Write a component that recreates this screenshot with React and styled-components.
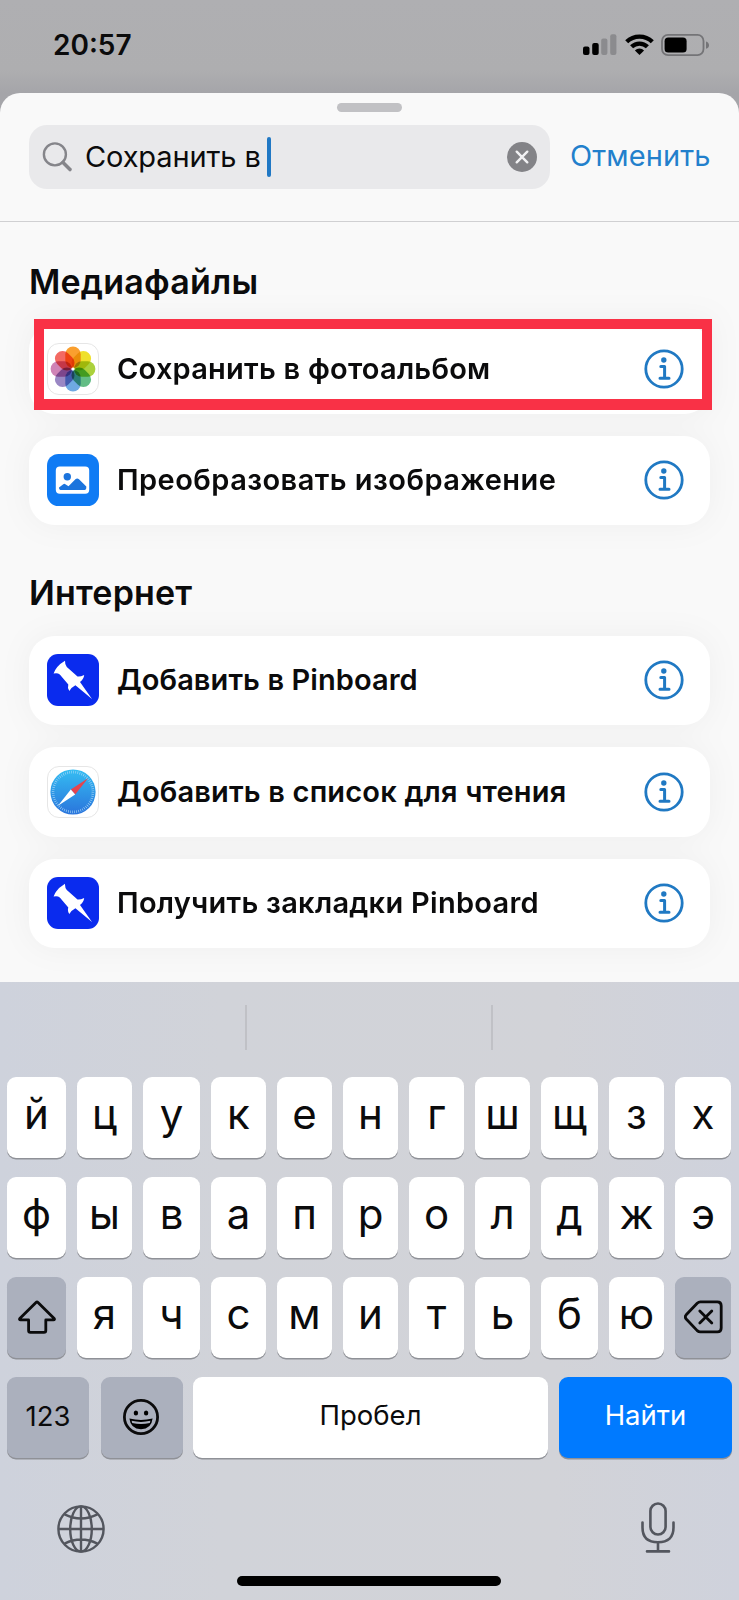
import React, { useState } from 'react'
import styled, { createGlobalStyle } from 'styled-components'

const GlobalStyle = createGlobalStyle`
  * {
    box-sizing: border-box;
  }
  body {
    margin: 0;
    background: #aeaeb1;
    font-family: Inter, Roboto, 'Liberation Sans', sans-serif;
    color: #0b0b0c;
  }
  button {
    border: 0;
    padding: 0;
    margin: 0;
    background: none;
    font: inherit;
    color: inherit;
  }
  svg {
    display: block;
    flex: none;
  }
`

const Phone = styled.div`
  display: flex;
  flex-direction: column;
  width: 739px;
  height: 1600px;
  overflow: hidden;
  background: linear-gradient(#afafb2 0, #aeaeb0 70px, #a5a5a9 93px, #a5a5a9);
`

const StatusBar = styled.div`
  display: flex;
  justify-content: space-between;
  align-items: center;
  flex: none;
  height: 93px;
  padding: 0 29px 4px 53px;
`

const Clock = styled.div`
  font-size: 28px;
  line-height: 34px;
  font-weight: 600;
`

const StatusIcons = styled.div`
  display: flex;
  align-items: center;
  gap: 7px;
`

const Sheet = styled.div`
  display: flex;
  flex-direction: column;
  flex: none;
  height: 889px;
  overflow: hidden;
  border-radius: 20px 20px 0 0;
  background: #f9f9f9;
`

const SheetHeader = styled.div`
  display: flex;
  flex-direction: column;
  align-items: center;
  flex: none;
  height: 129px;
  padding: 10px 29px 0;
  border-bottom: 1px solid #d0d0d2;
`

const Grabber = styled.div`
  width: 65px;
  height: 9px;
  border-radius: 5px;
  background: #c1c1c4;
`

const SearchRow = styled.div`
  display: flex;
  align-items: center;
  width: 100%;
  margin-top: 13px;
`

const SearchField = styled.div`
  display: flex;
  align-items: center;
  flex: none;
  width: 521px;
  height: 64px;
  padding: 0 13px;
  border-radius: 18px;
  background: #e9e9eb;
`

const Query = styled.div`
  margin-left: 12px;
  font-size: 29px;
  line-height: 40px;
  white-space: nowrap;
  letter-spacing: -0.13px;
`

const Caret = styled.div`
  width: 4px;
  height: 40px;
  margin-left: 6px;
  margin-right: auto;
  border-radius: 2px;
  background: #2078c4;
`

const Cancel = styled.button`
  margin-left: 20px;
  font-size: 29px;
  line-height: 40px;
  padding-bottom: 3px;
  color: #2280cc;
  white-space: nowrap;
  letter-spacing: 0.1px;
`

const Section = styled.section`
  flex: none;
  padding: 0 29px;
`

const SectionTitle = styled.h2`
  margin: 0;
  padding-top: ${props => props.$top}px;
  height: ${props => props.$height}px;
  font-size: 34px;
  line-height: 40px;
  font-weight: 600;
  letter-spacing: 0.2px;
`

const CardList = styled.div`
  display: flex;
  flex-direction: column;
  gap: 22px;
  filter: drop-shadow(0 0 15px rgba(0, 0, 0, 0.045));
`

const Card = styled.div`
  position: relative;
  display: flex;
  align-items: center;
  height: 89.4px;
  padding: 0 26px 0 18px;
  border-radius: 26px;
  background: #fff;
`

const CardLabel = styled.div`
  flex: 1;
  margin-left: 18px;
  font-size: 29px;
  line-height: 36px;
  font-weight: 600;
  white-space: nowrap;
  letter-spacing: ${props => props.$tracking}px;
`

/* red marker drawn over the card */
const Highlight = styled.div`
  position: absolute;
  left: 5px;
  top: -5px;
  width: 678px;
  height: 91px;
  border: 10px solid #f93146;
  border-bottom-width: 11px;
`

const Keyboard = styled.div`
  display: flex;
  flex-direction: column;
  flex: 1;
  background: linear-gradient(90deg, #ced2dc 0, #d1d3d9 30%, #d2d3d8 75%, #cfd2dc 100%);
`

const Suggestions = styled.div`
  display: grid;
  grid-template-columns: 247px 246px 1fr;
  flex: none;
  height: 94.5px;
  padding-top: 23px;
`

const Suggestion = styled.div`
  height: 45px;
  border-right: 2px solid #c0c1c6;

  &:last-child {
    border-right: 0;
  }
`

const Keys = styled.div`
  display: flex;
  flex-direction: column;
  gap: 19px;
  padding: 0 7px;
`

const KeyRow = styled.div`
  display: grid;
  column-gap: 11px;
  height: 81px;
  grid-template-columns: 59px 55px 57px 55px 55px 55px 55px 55px 57px 55px 56px;
`

const BottomRow = styled.div`
  display: flex;
  height: 81px;
`

const Key = styled.button`
  display: flex;
  align-items: center;
  justify-content: center;
  height: 81px;
  padding-bottom: 6px;
  border-radius: 9px;
  background: #fff;
  box-shadow: 0 1.5px 0 #8f9197;
  font-size: 42px;
  font-weight: 400;
  line-height: 50px;
`

const FunctionKey = styled(Key)`
  width: ${props => props.$width || 'auto'};
  margin-right: ${props => props.$gap || '0'};
  padding-bottom: ${props => props.$lift || '0'};
  background: ${props => (props.$primary ? '#007aff' : '#abb0bd')};
  color: ${props => (props.$primary ? '#fff' : 'inherit')};
  font-size: 27.5px;
`

const SpaceKey = styled(FunctionKey)`
  background: #fff;
`

const KeyboardFooter = styled.div`
  display: flex;
  justify-content: space-between;
  align-items: flex-end;
  height: 95px;
  padding: 0 64px 0 57px;
`

const HomeIndicator = styled.div`
  width: 264px;
  height: 10px;
  margin: 23.5px 0 0 237px;
  border-radius: 5px;
  background: #000;
`

const SignalIcon = () => (
  <svg width="35" height="22" viewBox="0 0 35 22">
    <rect x="0" y="12.5" width="6.5" height="8.5" rx="2" fill="#000" />
    <rect x="9.2" y="9" width="6.5" height="12" rx="2" fill="#000" />
    <rect x="18.2" y="4.5" width="6.2" height="16.5" rx="2" fill="#8b8b8e" />
    <rect x="27.2" y="0.3" width="6.2" height="20.7" rx="2" fill="#8b8b8e" />
  </svg>
)

const WifiIcon = () => (
  <svg width="29" height="22" viewBox="0 0 29 22">
    <g fill="none" stroke="#000" strokeWidth="4.3">
      <path d="M1.7 7.8A18.2 18.2 0 0 1 27.3 7.8" />
      <path d="M6.6 12.8A11.2 11.2 0 0 1 22.4 12.8" />
    </g>
    <path d="M14.5 21L9.9 16.4A6.6 6.6 0 0 1 19.1 16.4Z" />
  </svg>
)

const BatteryIcon = () => (
  <svg width="49" height="22" viewBox="0 0 49 22">
    <rect x="1" y="0.9" width="41.5" height="20.2" rx="6" fill="none" stroke="#747477" strokeWidth="1.8" />
    <rect x="3.6" y="3.6" width="22" height="15" rx="3.6" />
    <path d="M45 7.6q3 1 3 3.6t-3 3.6z" fill="#747477" />
  </svg>
)

const SearchIcon = () => (
  <svg width="31" height="31" viewBox="0 0 31 31" fill="none" stroke="#85858a">
    <circle cx="12.9" cy="12.4" r="11" strokeWidth="2.4" />
    <path d="M21 20.5L28 27.5" strokeWidth="3.6" strokeLinecap="round" />
  </svg>
)

const ClearIcon = () => (
  <svg width="30" height="30" viewBox="0 0 30 30">
    <circle cx="15" cy="15" r="15" fill="#838387" />
    <path d="M9.7 9.7L20.3 20.3M20.3 9.7L9.7 20.3" stroke="#f1f1f3" strokeWidth="2.4" strokeLinecap="round" />
  </svg>
)

const InfoIcon = () => (
  <svg width="40" height="40" viewBox="0 0 40 40" fill="none" stroke="#2079c3">
    <circle cx="20" cy="20" r="18.2" strokeWidth="2.8" />
    <circle cx="19.8" cy="11" r="2.7" fill="#2079c3" stroke="none" />
    <path d="M16.8 17.6H20.6V28.8M16 29.2H25" strokeWidth="3" strokeLinecap="round" strokeLinejoin="round" />
  </svg>
)

const PETALS = ['#fa9f2e', '#efe02b', '#abd13c', '#63bd85', '#6fa9e2', '#9a87c4', '#cf83b6', '#f36a63']

const Petal = styled.rect`
  mix-blend-mode: multiply;
`

const PhotosIcon = () => (
  <svg width="52" height="52" viewBox="0 0 52 52">
    <rect x="0.5" y="0.5" width="51" height="51" rx="11.5" fill="#fff" stroke="#e6e6e6" />
    {PETALS.map((color, i) => (
      <Petal
        key={color}
        x="18.3"
        y="3.6"
        width="15.4"
        height="21.4"
        rx="7.7"
        fill={color}
        transform={`rotate(${i * 45} 26 26)`}
      />
    ))}
    <circle cx="26" cy="26" r="1.6" fill="#fff" />
  </svg>
)

const ImageIcon = () => (
  <svg width="52" height="52" viewBox="0 0 52 52">
    <rect width="52" height="52" rx="11.5" fill="#0f7bf4" />
    <rect x="8.8" y="12.4" width="33.4" height="27.4" rx="4" fill="#fff" />
    <circle cx="20.3" cy="22.8" r="3.7" fill="#1b74dd" />
    <path
      d="M12 33.4L16.3 30.2Q17.3 29.5 18.4 30.2L21.5 32.2L28.4 25.3Q30.2 23.6 32 25.3L39.3 32.4V33.4Q39.3 36 36.8 36H14.5Q12 36 12 33.4Z"
      fill="#1b74dd"
    />
  </svg>
)

const PinboardIcon = () => (
  <svg width="52" height="52" viewBox="0 0 52 52">
    <rect width="52" height="52" rx="11" fill="#0a2bee" />
    <path
      d="M18 6.7Q17.8 10.5 19.8 13L30.5 22.5Q33 23 37.2 21Q36.8 25 33 28L45 45L28.4 31.2Q24.8 33 22.3 37Q20.2 34 21.3 30.6L12.8 20.6Q10.5 18.6 6.6 19.6Q9 12 18 6.7Z"
      fill="#fff"
    />
  </svg>
)

const SafariIcon = () => (
  <svg width="52" height="52" viewBox="0 0 52 52">
    <defs>
      <linearGradient id="safari" x1="0" y1="0" x2="0" y2="1">
        <stop offset="0" stopColor="#35bdf2" />
        <stop offset="1" stopColor="#2a74dc" />
      </linearGradient>
    </defs>
    <rect x="0.5" y="0.5" width="51" height="51" rx="11.5" fill="#fff" stroke="#e6e6e6" />
    <circle cx="26" cy="26" r="22.6" fill="url(#safari)" />
    <circle cx="26" cy="26" r="19.9" fill="none" stroke="#a9d8f7" strokeWidth="2.6" strokeDasharray="0.6 1.48" />
    <path d="M41 12.3L23.8 23.6L28.2 28.4Z" fill="#e5444f" />
    <path d="M11 39.7L23.8 23.6L28.2 28.4Z" fill="#fff" />
  </svg>
)

const ShiftIcon = () => (
  <svg width="38" height="34" viewBox="0 0 38 34">
    <path
      d="M18 2.4Q19 1.4 20 2.4L36.2 18.6Q37 19.8 35.4 19.9H27.8V30.6Q27.8 32.4 26 32.4H12.4Q10.6 32.4 10.6 30.6V19.9H2.6Q1 19.8 1.8 18.6Z"
      fill="none"
      stroke="#0b0b0c"
      strokeWidth="2.8"
      strokeLinejoin="round"
    />
  </svg>
)

const BackspaceIcon = () => (
  <svg width="39" height="34" viewBox="0 0 39 34" fill="none" stroke="#0b0b0c" strokeWidth="2.8" strokeLinejoin="round">
    <path d="M16.4 1.9H33.4Q37.2 1.9 37.2 5.8V28Q37.2 31.9 33.4 31.9H16.4Q14.6 31.9 13.2 30.6L2.2 19Q0.4 16.9 2.2 14.8L13.2 3.2Q14.6 1.9 16.4 1.9Z" />
    <path d="M15.8 10.9L27.8 22.9M27.8 10.9L15.8 22.9" strokeLinecap="round" />
  </svg>
)

const EmojiIcon = () => (
  <svg width="38" height="38" viewBox="0 0 38 38">
    <circle cx="18" cy="19" r="16.6" fill="none" stroke="#0b0b0c" strokeWidth="2.8" />
    <ellipse cx="12.9" cy="15" rx="2.2" ry="2.5" />
    <ellipse cx="23.1" cy="15" rx="2.2" ry="2.5" />
    <path d="M6.4 20.6Q18 23.4 29.6 20.6Q28.4 31.2 18 31.2Q7.6 31.2 6.4 20.6Z" />
    <path d="M8.6 22.8Q18 25 27.4 22.8L26.8 25Q18 27 9.2 25Z" fill="#abb0bd" />
  </svg>
)

const GlobeIcon = () => (
  <svg width="48" height="48" viewBox="0 0 48 48" fill="none" stroke="#53565e" strokeWidth="2.4">
    <circle cx="24" cy="24" r="22.6" />
    <ellipse cx="24" cy="24" rx="10.8" ry="22.6" />
    <path d="M24 1.4V46.6M1.4 24H46.6M7.6 9.4Q24 17.5 40.4 9.4M7.6 38.6Q24 30.5 40.4 38.6" />
  </svg>
)

const MicIcon = () => (
  <svg width="34" height="51" viewBox="0 0 34 51" fill="none" stroke="#53565e" strokeWidth="2.6" strokeLinecap="round">
    <rect x="9.4" y="1.5" width="15.2" height="31" rx="7.6" />
    <path d="M1.5 20.5V25.5Q1.5 40.3 17 40.3T32.5 25.5V20.5M17 40.3V49.4M6 49.4H28" />
  </svg>
)

const MEDIA = [
  { label: 'Сохранить в фотоальбом', icon: PhotosIcon, tracking: 0.23, highlighted: true },
  { label: 'Преобразовать изображение', icon: ImageIcon, tracking: 0.45 },
]

const INTERNET = [
  { label: 'Добавить в Pinboard', icon: PinboardIcon, tracking: 0.08 },
  { label: 'Добавить в список для чтения', icon: SafariIcon, tracking: 0.18 },
  { label: 'Получить закладки Pinboard', icon: PinboardIcon, tracking: 0.28 },
]

const ActionList = ({ actions }) => (
  <CardList>
    {actions.map(({ label, icon: ActionIcon, tracking, highlighted }) => (
      <Card key={label}>
        <ActionIcon />
        <CardLabel $tracking={tracking}>{label}</CardLabel>
        <InfoIcon />
        {highlighted && <Highlight />}
      </Card>
    ))}
  </CardList>
)

const App = () => {
  const [query, setQuery] = useState('Сохранить в')

  return (
    <React.Fragment>
      <GlobalStyle />
      <Phone>
        <StatusBar>
          <Clock>20:57</Clock>
          <StatusIcons>
            <SignalIcon />
            <WifiIcon />
            <BatteryIcon />
          </StatusIcons>
        </StatusBar>
        <Sheet>
          <SheetHeader>
            <Grabber />
            <SearchRow>
              <SearchField>
                <SearchIcon />
                <Query>{query}</Query>
                <Caret />
                <button type="button" onClick={() => setQuery('')}>
                  <ClearIcon />
                </button>
              </SearchField>
              <Cancel>Отменить</Cancel>
            </SearchRow>
          </SheetHeader>
          <Section>
            <SectionTitle $top={40} $height={102.3}>
              Медиафайлы
            </SectionTitle>
            <ActionList actions={MEDIA} />
          </Section>
          <Section>
            <SectionTitle $top={48} $height={110.7}>
              Интернет
            </SectionTitle>
            <ActionList actions={INTERNET} />
          </Section>
        </Sheet>
        <Keyboard>
          <Suggestions>
            <Suggestion />
            <Suggestion />
            <Suggestion />
          </Suggestions>
          <Keys>
            <KeyRow>
              {[...'йцукенгшщзх'].map(letter => (
                <Key key={letter}>{letter}</Key>
              ))}
            </KeyRow>
            <KeyRow>
              {[...'фывапролджэ'].map(letter => (
                <Key key={letter}>{letter}</Key>
              ))}
            </KeyRow>
            <KeyRow>
              <FunctionKey>
                <ShiftIcon />
              </FunctionKey>
              {[...'ячсмитьбю'].map(letter => (
                <Key key={letter}>{letter}</Key>
              ))}
              <FunctionKey>
                <BackspaceIcon />
              </FunctionKey>
            </KeyRow>
            <BottomRow>
              <FunctionKey $width="82px" $gap="12px" $lift="2px">
                123
              </FunctionKey>
              <FunctionKey $width="82px" $gap="10px">
                <EmojiIcon />
              </FunctionKey>
              <SpaceKey $width="355px" $gap="11px" $lift="5px">
                Пробел
              </SpaceKey>
              <FunctionKey $width="173px" $lift="5px" $primary>
                Найти
              </FunctionKey>
            </BottomRow>
          </Keys>
          <KeyboardFooter>
            <GlobeIcon />
            <MicIcon />
          </KeyboardFooter>
          <HomeIndicator />
        </Keyboard>
      </Phone>
    </React.Fragment>
  )
}

export default App
